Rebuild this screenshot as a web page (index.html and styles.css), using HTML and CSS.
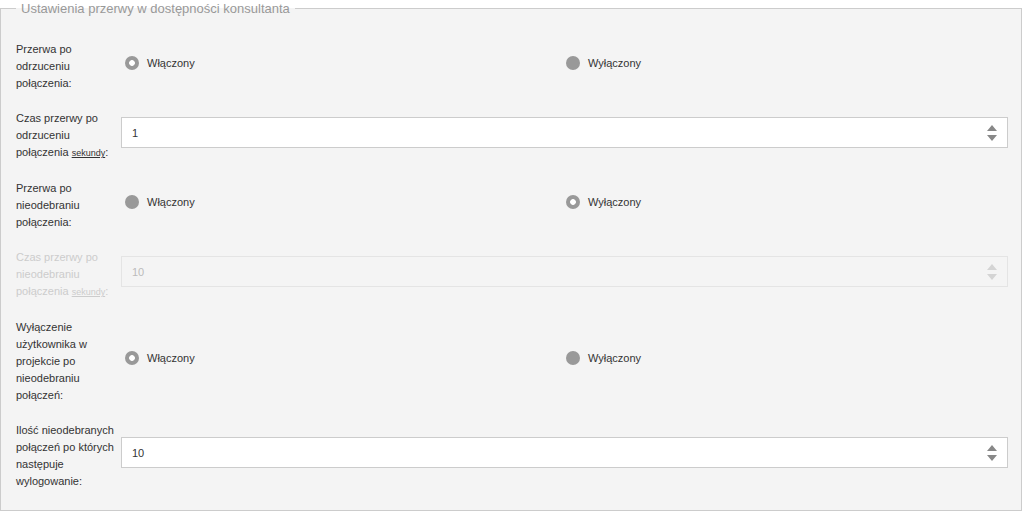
FILE: index.html
```html
<!DOCTYPE html>
<html>
<head>
    <title>Ustawienia przerwy</title>
    <link rel="stylesheet" href="styles.css">
</head>
<body>
    <fieldset class="settings">
        <legend>Ustawienia przerwy w dostępności konsultanta</legend>

        <div class="row">
            <label class="field-label">Przerwa po odrzuceniu połączenia:</label>
            <div class="options">
                <label class="option"><input type="radio" name="reject" checked> Włączony</label>
                <label class="option"><input type="radio" name="reject"> Wyłączony</label>
            </div>
        </div>

        <div class="row">
            <label class="field-label">Czas przerwy po odrzuceniu połączenia <abbr>sekundy</abbr>:</label>
            <div class="number">
                <input type="text" value="1">
                <svg class="spin" width="10" height="16" viewBox="0 0 10 16"><path d="M0 6 L5 0 L10 6 Z M0 10 L10 10 L5 16 Z"/></svg>
            </div>
        </div>

        <div class="row">
            <label class="field-label">Przerwa po nieodebraniu połączenia:</label>
            <div class="options">
                <label class="option"><input type="radio" name="missed"> Włączony</label>
                <label class="option"><input type="radio" name="missed" checked> Wyłączony</label>
            </div>
        </div>

        <div class="row disabled">
            <label class="field-label">Czas przerwy po nieodebraniu połączenia <abbr>sekundy</abbr>:</label>
            <div class="number">
                <input type="text" value="10" disabled>
                <svg class="spin" width="10" height="16" viewBox="0 0 10 16"><path d="M0 6 L5 0 L10 6 Z M0 10 L10 10 L5 16 Z"/></svg>
            </div>
        </div>

        <div class="row">
            <label class="field-label">Wyłączenie użytkownika w projekcie po nieodebraniu połączeń:</label>
            <div class="options">
                <label class="option"><input type="radio" name="logout" checked> Włączony</label>
                <label class="option"><input type="radio" name="logout"> Wyłączony</label>
            </div>
        </div>

        <div class="row">
            <label class="field-label">Ilość nieodebranych połączeń po których następuje wylogowanie:</label>
            <div class="number">
                <input type="text" value="10">
                <svg class="spin" width="10" height="16" viewBox="0 0 10 16"><path d="M0 6 L5 0 L10 6 Z M0 10 L10 10 L5 16 Z"/></svg>
            </div>
        </div>
    </fieldset>
</body>
</html>
```

FILE: styles.css
```css
body {
  margin: 0;
  background-color: #fff;
  font-family: "Liberation Sans", Arial, sans-serif;
  font-size: 11px;
  color: #333;
}

.settings {
  margin: 0 2px 0 0;
  border: 1px solid #ccc;
  background-color: #f4f4f4;
  padding: 17px 13px 20px 15px;
  display: flex;
  flex-direction: column;
  gap: 11px;
}

.settings legend {
  padding: 0 5px;
  font-size: 13px;
  line-height: 17px;
  color: #999;
}

.row {
  display: grid;
  grid-template-columns: 101px 1fr;
  column-gap: 4px;
  align-items: center;
}

.field-label {
  padding-top: 7px;
  line-height: 17px;
}

.field-label abbr {
  font-size: 9px;
  text-decoration: underline;
}

.options {
  display: grid;
  grid-template-columns: 441px 1fr;
}

.option {
  display: flex;
  align-items: center;
  gap: 8px;
  margin-left: 4px;
}

.option input {
  appearance: none;
  -webkit-appearance: none;
  width: 14px;
  height: 14px;
  margin: 0 0 1px 0;
  border-radius: 50%;
  background-color: #999;
}

.option input:checked {
  background: radial-gradient(circle, #fff 0, #fff 2.5px, #999 3.2px);
}

.number {
  position: relative;
}

.number input {
  box-sizing: border-box;
  width: 100%;
  height: 31px;
  margin: 0;
  padding: 0 10px;
  border: 1px solid #ccc;
  background-color: #fff;
  font-family: inherit;
  font-size: 11px;
  color: #333;
  outline: none;
}

.spin {
  position: absolute;
  right: 11px;
  top: 7.5px;
  fill: #888;
}

.disabled .field-label {
  color: #ccc;
}

.disabled .number input {
  background-color: #f4f4f4;
  border-color: #e4e4e4;
  color: #bbb;
}

.disabled .spin {
  fill: #d4d4d4;
}
```
